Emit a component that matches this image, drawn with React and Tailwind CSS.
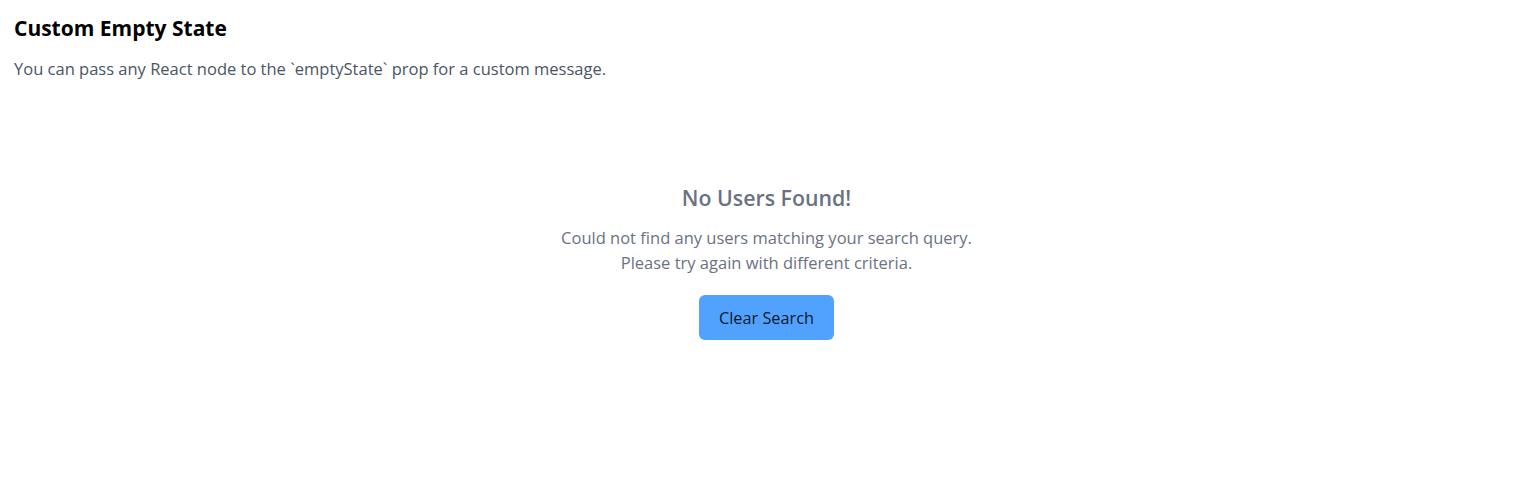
export default function App() {
  return (
    <div
      className="min-h-[485px] bg-white pl-[14px] pr-[19px] pt-[14px]"
      style={{ fontFamily: '"Open Sans", "Noto Sans", sans-serif' }}
    >
      <h2 className="text-[21px] leading-[28px] font-bold text-black">Custom Empty State</h2>
      <p className="mt-[15px] text-[16.5px] leading-[24px] text-gray-600">
        You can pass any React node to the `emptyState` prop for a custom message.
      </p>

      <div className="mt-[103px] flex flex-col items-center text-center">
        <h3 className="text-[21.3px] leading-[28px] font-semibold text-gray-500">No Users Found!</h3>
        <p className="mt-[13px] text-[16.5px] leading-[25px] text-gray-500">
          Could not find any users matching your search query.
          <br />
          Please try again with different criteria.
        </p>
        <button className="mt-[20px] h-[45px] w-[135px] rounded-md bg-blue-400 pt-[2px] text-[16.3px] text-gray-900">
          Clear Search
        </button>
      </div>
    </div>
  );
}
